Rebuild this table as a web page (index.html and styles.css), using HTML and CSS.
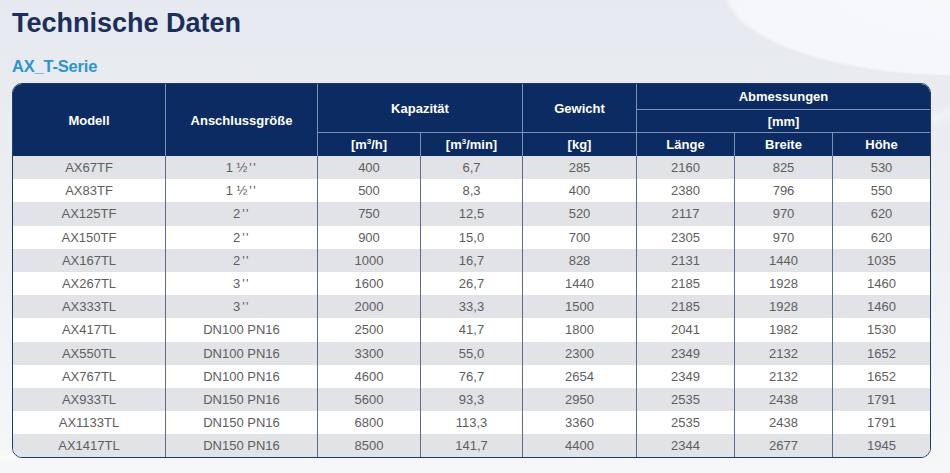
FILE: index.html
```html
<!DOCTYPE html>
<html lang="de">
<head>
<meta charset="utf-8">
<title>Technische Daten</title>
<link rel="stylesheet" href="styles.css">
</head>
<body>
<div class="page">
  <h1 class="title">Technische Daten</h1>
  <h2 class="subtitle">AX_T-Serie</h2>
  <div class="table-wrap">
    <table class="spec">
      <colgroup>
        <col class="c1"><col class="c2"><col class="c3"><col class="c4"><col class="c5"><col class="c6"><col class="c7"><col class="c8">
      </colgroup>
      <thead>
        <tr class="h1">
          <th rowspan="3">Modell</th>
          <th rowspan="3">Anschlussgröße</th>
          <th colspan="2" rowspan="2" class="hb">Kapazität</th>
          <th rowspan="2" class="hb">Gewicht</th>
          <th colspan="3" class="hb last">Abmessungen</th>
        </tr>
        <tr class="h2">
          <th colspan="3" class="hb last">[mm]</th>
        </tr>
        <tr class="h3">
          <th>[m<sup>3</sup>/h]</th>
          <th>[m<sup>3</sup>/min]</th>
          <th>[kg]</th>
          <th>Länge</th>
          <th>Breite</th>
          <th class="last">Höhe</th>
        </tr>
      </thead>
      <tbody>
        <tr><td>AX67TF</td><td>1 ½<span class="q">''</span></td><td>400</td><td>6,7</td><td>285</td><td>2160</td><td>825</td><td>530</td></tr>
        <tr><td>AX83TF</td><td>1 ½<span class="q">''</span></td><td>500</td><td>8,3</td><td>400</td><td>2380</td><td>796</td><td>550</td></tr>
        <tr><td>AX125TF</td><td>2<span class="q">''</span></td><td>750</td><td>12,5</td><td>520</td><td>2117</td><td>970</td><td>620</td></tr>
        <tr><td>AX150TF</td><td>2<span class="q">''</span></td><td>900</td><td>15,0</td><td>700</td><td>2305</td><td>970</td><td>620</td></tr>
        <tr><td>AX167TL</td><td>2<span class="q">''</span></td><td>1000</td><td>16,7</td><td>828</td><td>2131</td><td>1440</td><td>1035</td></tr>
        <tr><td>AX267TL</td><td>3<span class="q">''</span></td><td>1600</td><td>26,7</td><td>1440</td><td>2185</td><td>1928</td><td>1460</td></tr>
        <tr><td>AX333TL</td><td>3<span class="q">''</span></td><td>2000</td><td>33,3</td><td>1500</td><td>2185</td><td>1928</td><td>1460</td></tr>
        <tr><td>AX417TL</td><td>DN100 PN16</td><td>2500</td><td>41,7</td><td>1800</td><td>2041</td><td>1982</td><td>1530</td></tr>
        <tr><td>AX550TL</td><td>DN100 PN16</td><td>3300</td><td>55,0</td><td>2300</td><td>2349</td><td>2132</td><td>1652</td></tr>
        <tr><td>AX767TL</td><td>DN100 PN16</td><td>4600</td><td>76,7</td><td>2654</td><td>2349</td><td>2132</td><td>1652</td></tr>
        <tr><td>AX933TL</td><td>DN150 PN16</td><td>5600</td><td>93,3</td><td>2950</td><td>2535</td><td>2438</td><td>1791</td></tr>
        <tr><td>AX1133TL</td><td>DN150 PN16</td><td>6800</td><td>113,3</td><td>3360</td><td>2535</td><td>2438</td><td>1791</td></tr>
        <tr><td>AX1417TL</td><td>DN150 PN16</td><td>8500</td><td>141,7</td><td>4400</td><td>2344</td><td>2677</td><td>1945</td></tr>
      </tbody>
    </table>
  </div>
</div>
</body>
</html>
```

FILE: styles.css
```css
html, body {
  margin: 0;
  padding: 0;
}
body {
  width: 950px;
  height: 473px;
  overflow: hidden;
  font-family: "Liberation Sans", Arial, sans-serif;
  background:
    radial-gradient(ellipse 330px 120px at 960px -10px, rgba(250,251,253,0.9) 0%, rgba(248,249,252,0.85) 70%, rgba(248,249,252,0) 72%),
    linear-gradient(160deg, rgba(255,255,255,0) 55%, rgba(255,255,255,0.35) 56%, rgba(255,255,255,0) 57.5%),
    linear-gradient(180deg, #e6e9ef 0%, #eceef2 45%, #f6f7f9 100%);
}
.page {
  padding: 10px 12px 0 12px;
}
.title {
  margin: 0;
  font-size: 27px;
  line-height: 27px;
  font-weight: bold;
  color: #1b2e5c;
}
.subtitle {
  margin: 21px 0 0 0;
  font-size: 16.5px;
  line-height: 16px;
  font-weight: bold;
  color: #2d94d1;
  letter-spacing: -0.2px;
}
.table-wrap {
  margin-top: 9px;
  width: 917px;
  border: 1px solid #203a6b;
  border-radius: 10px;
  overflow: hidden;
  background: #fff;
}
.spec {
  width: 917px;
  table-layout: fixed;
  border-collapse: separate;
  border-spacing: 0;
  font-size: 13px;
}
.c1 { width: 153px; }
.c2 { width: 152px; }
.c3 { width: 103px; }
.c4 { width: 102px; }
.c5 { width: 114px; }
.c6 { width: 98px; }
.c7 { width: 98px; }
.c8 { width: 97px; }

.spec th {
  background: #0c2b63;
  color: #ffffff;
  font-weight: bold;
  font-size: 13px;
  padding: 0;
  border-right: 1px solid #7f90b3;
  text-align: center;
}
.spec th.last { border-right: none; }
.spec th.hb { border-bottom: 1px solid #7f90b3; }
.spec tr.h1 th { height: 25px; }
.spec tr.h2 th { height: 22px; }
.spec tr.h3 th { height: 23px; }
.spec th sup {
  font-size: 8px;
  line-height: 0;
  vertical-align: 5px;
}
.spec td {
  height: 23.2px;
  padding: 0;
  text-align: center;
  color: #5e5e5e;
  font-size: 13px;
  border-right: 1px solid #5a6d8e;
}
.spec td .q {
  margin-left: 2px;
  letter-spacing: 1.5px;
}
.spec td:last-child { border-right: none; }
.spec tbody tr:nth-child(odd) td { background: #e1e3e7; }
.spec tbody tr:nth-child(even) td { background: #ffffff; }
```
